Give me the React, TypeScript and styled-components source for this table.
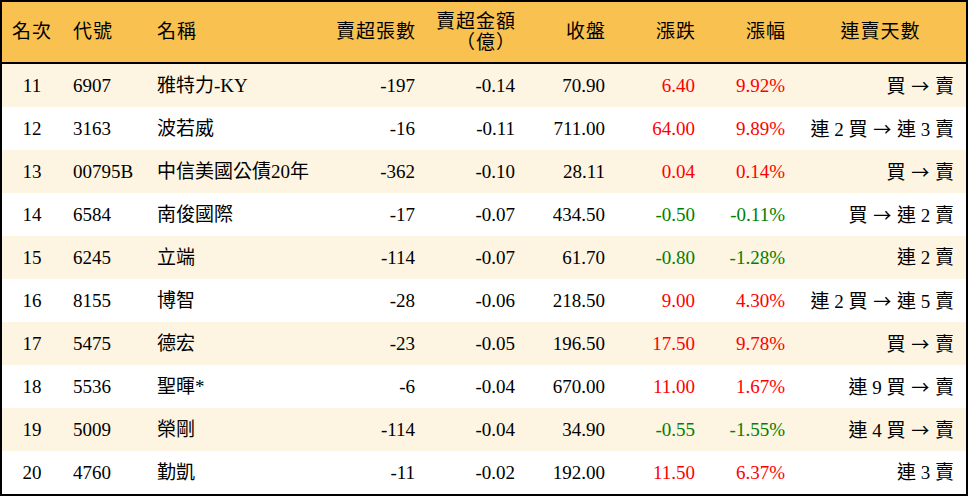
import React from 'react'
import styled, { createGlobalStyle } from 'styled-components'

const GlobalStyle = createGlobalStyle`
  html, body {
    margin: 0;
    padding: 0;
    background: #ffffff;
  }
`

type Align = 'left' | 'right' | 'center'

type RowData = {
  rank: string
  code: string
  name: string
  shares: string
  amount: string
  close: string
  change: string
  pct: string
  streak: string
}

const columns = '60px 84px 184px 95px 100px 90px 90px 90px 1fr'

const Table = styled.div`
  width: 968px;
  height: 496px;
  box-sizing: border-box;
  border: 2px solid #000;
  font-family: "Liberation Serif", "Noto Sans CJK TC", serif;
  color: #000;
  display: flex;
  flex-direction: column;
`

const HeaderRow = styled.div`
  display: grid;
  grid-template-columns: ${columns};
  height: 60px;
  background: #f8c150;
  border-bottom: 2px solid #000;
  font-size: 19px;
`

const Row = styled.div<{ $odd: boolean }>`
  display: grid;
  grid-template-columns: ${columns};
  height: 43px;
  background: ${p => (p.$odd ? '#fdf4e1' : '#ffffff')};
  font-size: 19px;
`

const Cell = styled.div<{ $align: Align; $color?: string; $pad?: number }>`
  display: flex;
  align-items: center;
  justify-content: ${p =>
    p.$align === 'left' ? 'flex-start' : p.$align === 'right' ? 'flex-end' : 'center'};
  text-align: ${p => p.$align};
  padding: ${p =>
    p.$align === 'left' ? '0 0 0 11px' : p.$align === 'right' ? `0 ${p.$pad ?? 10}px 0 0` : '0'};
  color: ${p => p.$color || '#000'};
  white-space: nowrap;
  line-height: 22px;
`

const HeadCell = styled(Cell)`
  letter-spacing: 1px;
`

const Stack = styled.span`
  display: flex;
  flex-direction: column;
  align-items: flex-end;
  line-height: 21px;
`

const Arrow = styled.span`
  font-family: "Noto Sans CJK TC", sans-serif;
  font-size: 18px;
  margin: 0 1px;
`

const rows: RowData[] = [
  { rank: '11', code: '6907', name: '雅特力-KY', shares: '-197', amount: '-0.14', close: '70.90', change: '6.40', pct: '9.92%', streak: '買 → 賣' },
  { rank: '12', code: '3163', name: '波若威', shares: '-16', amount: '-0.11', close: '711.00', change: '64.00', pct: '9.89%', streak: '連 2 買 → 連 3 賣' },
  { rank: '13', code: '00795B', name: '中信美國公債20年', shares: '-362', amount: '-0.10', close: '28.11', change: '0.04', pct: '0.14%', streak: '買 → 賣' },
  { rank: '14', code: '6584', name: '南俊國際', shares: '-17', amount: '-0.07', close: '434.50', change: '-0.50', pct: '-0.11%', streak: '買 → 連 2 賣' },
  { rank: '15', code: '6245', name: '立端', shares: '-114', amount: '-0.07', close: '61.70', change: '-0.80', pct: '-1.28%', streak: '連 2 賣' },
  { rank: '16', code: '8155', name: '博智', shares: '-28', amount: '-0.06', close: '218.50', change: '9.00', pct: '4.30%', streak: '連 2 買 → 連 5 賣' },
  { rank: '17', code: '5475', name: '德宏', shares: '-23', amount: '-0.05', close: '196.50', change: '17.50', pct: '9.78%', streak: '買 → 賣' },
  { rank: '18', code: '5536', name: '聖暉*', shares: '-6', amount: '-0.04', close: '670.00', change: '11.00', pct: '1.67%', streak: '連 9 買 → 賣' },
  { rank: '19', code: '5009', name: '榮剛', shares: '-114', amount: '-0.04', close: '34.90', change: '-0.55', pct: '-1.55%', streak: '連 4 買 → 賣' },
  { rank: '20', code: '4760', name: '勤凱', shares: '-11', amount: '-0.02', close: '192.00', change: '11.50', pct: '6.37%', streak: '連 3 賣' },
]

const tone = (v: string) => (v.startsWith('-') ? '#008000' : '#ff0000')

const Streak = ({ text }: { text: string }) => {
  const parts = text.split('→')
  return (
    <span>
      {parts.map((part, i) => (
        <React.Fragment key={i}>
          {i > 0 && <Arrow>→</Arrow>}
          {part}
        </React.Fragment>
      ))}
    </span>
  )
}

export default function App() {
  return (
    <>
      <GlobalStyle />
      <Table>
        <HeaderRow>
          <HeadCell $align="center">名次</HeadCell>
          <HeadCell $align="left">代號</HeadCell>
          <HeadCell $align="left">名稱</HeadCell>
          <HeadCell $align="right" $pad={9}>賣超張數</HeadCell>
          <HeadCell $align="right" $pad={9}>
            <Stack>
              <span>賣超金額</span>
              <span>（億）</span>
            </Stack>
          </HeadCell>
          <HeadCell $align="right" $pad={9}>收盤</HeadCell>
          <HeadCell $align="right" $pad={9}>漲跌</HeadCell>
          <HeadCell $align="right" $pad={9}>漲幅</HeadCell>
          <HeadCell $align="center">連賣天數</HeadCell>
        </HeaderRow>
        {rows.map((r, i) => (
          <Row key={r.rank} $odd={i % 2 === 0}>
            <Cell $align="center">{r.rank}</Cell>
            <Cell $align="left">{r.code}</Cell>
            <Cell $align="left">{r.name}</Cell>
            <Cell $align="right">{r.shares}</Cell>
            <Cell $align="right">{r.amount}</Cell>
            <Cell $align="right">{r.close}</Cell>
            <Cell $align="right" $color={tone(r.change)}>{r.change}</Cell>
            <Cell $align="right" $color={tone(r.pct)}>{r.pct}</Cell>
            <Cell $align="right" $pad={12}><Streak text={r.streak} /></Cell>
          </Row>
        ))}
      </Table>
    </>
  )
}
